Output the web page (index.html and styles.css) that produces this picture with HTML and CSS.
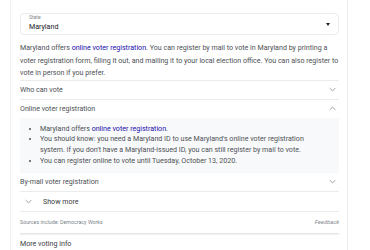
FILE: index.html
```html
<!DOCTYPE html>
<html>
<head>
    <title>Voting info</title>
    <link rel="stylesheet" href="styles.css">
</head>
<body>
    <div class="card">
        <div class="select">
            <div class="select-label">State</div>
            <div class="select-value">Maryland</div>
            <span class="caret"></span>
        </div>

        <p class="intro">Maryland offers <a href="#">online voter registration</a>. You can register by mail to vote in Maryland by printing a voter registration form, filling it out, and mailing it to your local election office. You can also register to vote in person if you prefer.</p>

        <!-- Accordion -->
        <div class="row">
            <span>Who can vote</span>
            <svg class="chev" viewBox="0 0 10 6"><path d="M1 1l4 4 4-4"/></svg>
        </div>
        <div class="row open">
            <span>Online voter registration</span>
            <svg class="chev" viewBox="0 0 10 6"><path d="M1 5l4-4 4 4"/></svg>
        </div>
        <div class="panel">
            <ul>
                <li>Maryland offers <a href="#">online voter registration</a>.</li>
                <li>You should know: you need a Maryland ID to use Maryland's online voter registration system. If you don't have a Maryland-issued ID, you can still register by mail to vote.</li>
                <li>You can register online to vote until Tuesday, October 13, 2020.</li>
            </ul>
        </div>
        <div class="row">
            <span>By-mail voter registration</span>
            <svg class="chev" viewBox="0 0 10 6"><path d="M1 1l4 4 4-4"/></svg>
        </div>
        <div class="row more">
            <svg class="chev" viewBox="0 0 10 6"><path d="M1 1l4 4 4-4"/></svg>
            <span>Show more</span>
        </div>

        <div class="sources">
            <span>Sources include: Democracy Works</span>
            <span class="feedback">Feedback</span>
        </div>

        <div class="footer">More voting info</div>
    </div>
</body>
</html>
```

FILE: styles.css
```css
body { margin: 0; background: #fff; font-family: Roboto, Arial, sans-serif; color: #202124; overflow: hidden; }
a { color: #1a0dab; text-decoration: none; }

.card {
    width: 319px;
    margin-left: 10px;
    padding: 13px 8px 10px 9px;
    border-left: 1px solid #f1f1f1;
    border-right: 1px solid #ebebeb;
}

/* State select */
.select {
    position: relative;
    height: 19px;
    padding: 0 0 1px 8px;
    border: 1px solid #ececec;
    border-radius: 4px;
}
.select-label { font-size: 5px; color: #80868b; line-height: 7px; }
.select-value { font-size: 7.1px; line-height: 12px; color: #202124; }
.caret {
    position: absolute;
    right: 8px;
    top: 9px;
    border-left: 2.5px solid transparent;
    border-right: 2.5px solid transparent;
    border-top: 3px solid #202124;
}

.intro {
    margin: 7px 0 0;
    font-size: 7.1px;
    line-height: 12.5px;
    color: #4d5156;
    border-bottom: 1px solid #ebebeb;
}

/* Accordion rows */
.row {
    display: flex;
    justify-content: space-between;
    align-items: center;
    height: 18px;
    font-size: 7.1px;
    color: #4d5156;
    border-bottom: 1px solid #ebebeb;
}
.row.open { border-bottom: none; }
.chev { width: 7px; height: 5px; margin-right: 3px; fill: none; stroke: #80868b; stroke-width: 1.1; }

.panel {
    background: #f8f9fa;
    padding: 6px 20px 6px 8px;
}
.panel ul { margin: 0; padding: 0 0 0 12px; font-size: 7.1px; line-height: 10.8px; color: #4d5156; }

.row.more { justify-content: flex-start; gap: 11px; padding-left: 5px; height: 19px; color: #3c4043; }
.row.more .chev { margin: 0; }

.sources {
    display: flex;
    justify-content: space-between;
    align-items: center;
    height: 21px;
    font-size: 5.3px;
    color: #80868b;
    border-bottom: 1px solid #e6e6e6;
    box-shadow: 0 1px 1px #f2f2f2;
}
.feedback { font-style: italic; font-size: 5.8px; }

.footer { font-size: 7.1px; color: #3c4043; padding-top: 5px; line-height: 10px; }
```
